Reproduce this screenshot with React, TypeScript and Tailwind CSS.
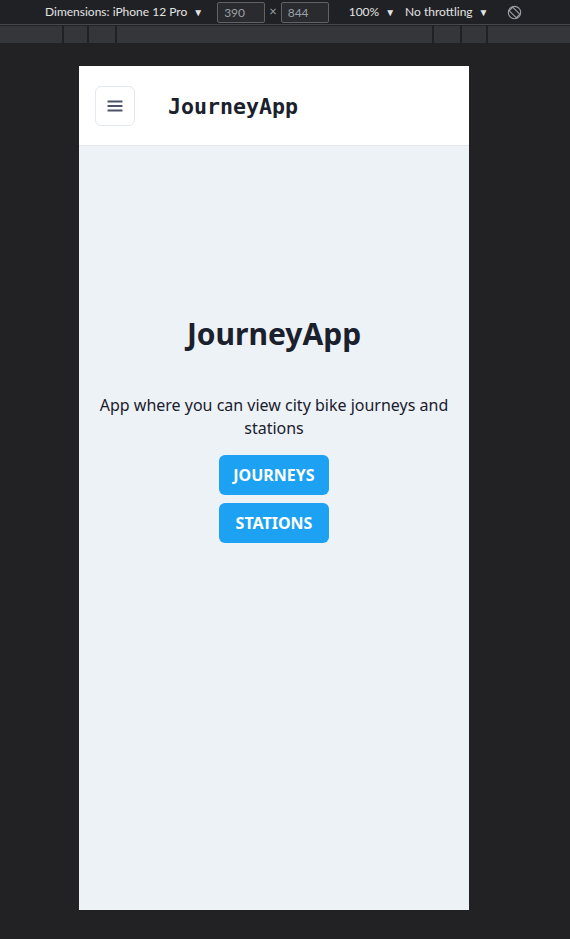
import React from 'react';

const Caret = () => <span className="ml-[6px] text-[10px] leading-none text-[#e3e3e3]">▼</span>;

const RotateIcon = () => (
  <svg width="15" height="15" viewBox="0 0 16 16" fill="none" stroke="#9aa0a6" strokeWidth="1.2">
    <circle cx="8" cy="8" r="6.6" />
    <rect x="5.3" y="2.6" width="5.4" height="10.8" rx="1" transform="rotate(-45 8 8)" />
  </svg>
);

const Toolbar = () => (
  <div className="h-[25px] bg-[#202124] border-b border-[#47484c] flex items-center pl-[45px] text-[12px] text-[#e3e3e3]" style={{ fontFamily: 'Lato, sans-serif' }}>
    <span className="flex items-center">Dimensions: iPhone 12 Pro<Caret /></span>
    <div className="ml-[14px] w-[48px] h-[21px] border border-[#5f6368] rounded-[2px] bg-[#2a2b2e] text-[#9aa0a6] pl-[6px] leading-[19px]">390</div>
    <span className="mx-[4px] text-[#9aa0a6] text-[13px]">×</span>
    <div className="w-[48px] h-[21px] border border-[#5f6368] rounded-[2px] bg-[#2a2b2e] text-[#9aa0a6] pl-[6px] leading-[19px]">844</div>
    <span className="ml-[20px] flex items-center">100%<Caret /></span>
    <span className="ml-[10px] flex items-center">No throttling<Caret /></span>
    <span className="ml-[18px] flex items-center"><RotateIcon /></span>
  </div>
);

const Ruler = () => (
  <div className="mt-px h-[17px] bg-[#35363a] flex">
    <div className="w-[62px]" />
    <div className="w-[2px] bg-[#202124]" />
    <div className="w-[23px]" />
    <div className="w-[2px] bg-[#202124]" />
    <div className="w-[26px]" />
    <div className="w-[2px] bg-[#202124]" />
    <div className="flex-1" />
    <div className="w-[2px] bg-[#202124]" />
    <div className="w-[26px]" />
    <div className="w-[2px] bg-[#202124]" />
    <div className="w-[24px]" />
    <div className="w-[2px] bg-[#202124]" />
    <div className="w-[82px]" />
  </div>
);

const Hamburger = () => (
  <svg width="16" height="12" viewBox="0 0 16 12" fill="#4a5568">
    <rect x="0.5" y="0.5" width="15" height="2" rx="0.5" />
    <rect x="0.5" y="5" width="15" height="2" rx="0.5" />
    <rect x="0.5" y="9.5" width="15" height="2" rx="0.5" />
  </svg>
);

const Phone = () => (
  <div className="w-[390px] h-[844px] bg-[#edf2f7] flex flex-col" style={{ fontFamily: '"Noto Sans", "Open Sans", sans-serif' }}>
    <header className="h-[80px] bg-white border-b border-[#e2e8f0] flex items-center px-4">
      <button className="w-[40px] h-[40px] rounded-md border border-[#e2e8f0] flex items-center justify-center">
        <Hamburger />
      </button>
      <span className="ml-[33px] mt-[4px] text-[21.6px] font-bold text-[#1a202c]" style={{ fontFamily: '"DejaVu Sans Mono", "Liberation Mono", monospace' }}>
        JourneyApp
      </span>
    </header>
    <main className="flex flex-col items-center px-[14px] pt-[168px] text-[#1a202c]">
      <h1 className="text-[30px] font-bold leading-[40px]">JourneyApp</h1>
      <p className="mt-[40px] text-[16px] leading-[23px] text-center">
        App where you can view city bike journeys and stations
      </p>
      <div className="mt-[15px] w-[110px] flex flex-col gap-2">
        <button className="h-[40px] rounded-md bg-[#1da1f2] text-white font-bold text-[16px]">JOURNEYS</button>
        <button className="h-[40px] rounded-md bg-[#1da1f2] text-white font-bold text-[16px]">STATIONS</button>
      </div>
    </main>
  </div>
);

export default function App() {
  return (
    <div className="w-[570px] h-[939px] bg-[#222224] overflow-hidden">
      <Toolbar />
      <Ruler />
      <div className="pt-[23px] pl-[79px]">
        <Phone />
      </div>
    </div>
  );
}
